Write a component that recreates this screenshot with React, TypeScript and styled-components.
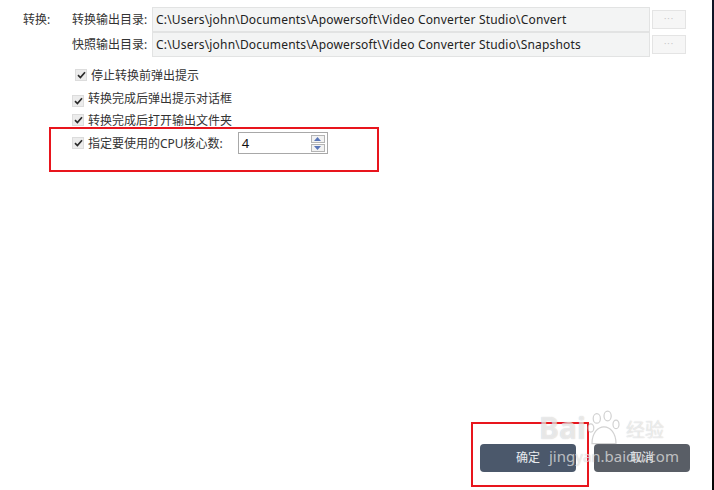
import React from 'react';
import styled, { createGlobalStyle } from 'styled-components';

const GlobalStyle = createGlobalStyle`
  html, body {
    margin: 0;
    padding: 0;
    background: #ffffff;
  }
  body {
    font-family: 'Noto Sans', 'Noto Sans CJK SC', sans-serif;
    font-size: 12px;
    color: #333333;
  }
`;

const Page = styled.div`
  position: relative;
  width: 714px;
  height: 490px;
  display: flex;
  overflow: hidden;
  background: #ffffff;
`;

const Content = styled.div`
  flex: 1;
  display: flex;
  flex-direction: column;
`;

const EdgeStrip = styled.div`
  width: 2px;
  background: linear-gradient(#0f1424 0%, #15243a 40%, #0b0b10 60%, #050505 100%);
`;

const Section = styled.div`
  display: flex;
  padding: 7px 0 0 23px;
`;

const SectionLabel = styled.div`
  width: 49px;
  height: 25px;
  line-height: 25px;
  white-space: nowrap;
`;

const PathGrid = styled.div`
  display: grid;
  grid-template-columns: 80px 498px 36px;
  grid-auto-rows: 25px;
  align-items: center;
`;

const PathLabel = styled.div`
  white-space: nowrap;
  line-height: 25px;
`;

const PathInput = styled.div`
  height: 25px;
  box-sizing: border-box;
  border: 1px solid #e2e3e3;
  background: #f3f4f4;
  padding: 0 3px;
  line-height: 23px;
  color: #222222;
  letter-spacing: 0.18px;
  white-space: nowrap;
  overflow: hidden;
`;

const BrowseButton = styled.div`
  height: 19px;
  margin-left: 2px;
  box-sizing: border-box;
  border: 1px solid #e4e4e4;
  background: #f6f6f6;
  color: #c8c8c8;
  font-size: 9px;
  line-height: 15px;
  text-align: center;
  letter-spacing: 1px;
`;

const Options = styled.div`
  display: flex;
  flex-direction: column;
  padding: 9px 0 0 72px;
`;

const OptionRow = styled.div<{ $indent?: number; $height: number; $bottom?: boolean }>`
  display: flex;
  align-items: ${(p) => (p.$bottom ? 'flex-end' : 'center')};
  box-sizing: border-box;
  height: ${(p) => p.$height}px;
  padding-left: ${(p) => p.$indent ?? 0}px;
  padding-bottom: ${(p) => (p.$bottom ? 2 : 0)}px;
  white-space: nowrap;
`;

const Box = styled.span`
  width: 12px;
  height: 12px;
  box-sizing: border-box;
  border: 1px solid #dcdcdc;
  background: #ececec;
  display: inline-flex;
  align-items: center;
  justify-content: center;
  margin-right: 4px;
`;

const SpinBox = styled.div`
  margin-left: 15px;
  width: 90px;
  height: 22px;
  box-sizing: border-box;
  border: 1px solid #a8a8a8;
  display: flex;
  align-items: center;
  justify-content: space-between;
  padding: 0 2px 0 3px;
  background: #ffffff;
  font-size: 13px;
  color: #111111;
`;

const SpinArrows = styled.div`
  display: flex;
  flex-direction: column;
  gap: 1px;
`;

const SpinArrow = styled.div`
  width: 14px;
  height: 8px;
  box-sizing: border-box;
  border: 1px solid #b4b4b4;
  background: #f2f2f2;
  display: flex;
  align-items: center;
  justify-content: center;
`;

const Spacer = styled.div`
  flex: 1;
`;

const Footer = styled.div`
  display: flex;
  justify-content: flex-end;
  gap: 18px;
  padding: 0 22px 18px 0;
`;

const ActionButton = styled.div<{ $tone: 'primary' | 'secondary' }>`
  width: 96px;
  height: 28px;
  border-radius: 4px;
  background: ${(p) => (p.$tone === 'primary' ? '#4b586b' : '#595e66')};
  color: #e8ebef;
  font-size: 12px;
  line-height: 28px;
  text-align: center;
`;

const Highlight = styled.div<{ $x: number; $y: number; $w: number; $h: number }>`
  position: absolute;
  left: ${(p) => p.$x}px;
  top: ${(p) => p.$y}px;
  width: ${(p) => p.$w}px;
  height: ${(p) => p.$h}px;
  box-sizing: border-box;
  border: 2px solid #e8151d;
  pointer-events: none;
`;

const Watermark = styled.div`
  position: absolute;
  left: 539px;
  top: 406px;
  display: flex;
  flex-direction: column;
  color: rgba(255, 255, 255, 0.6);
  text-shadow: 0 0 1px rgba(110, 110, 110, 0.4);
  pointer-events: none;
`;

const MarkTop = styled.div`
  display: flex;
  align-items: flex-end;
  height: 40px;
`;

const MarkBai = styled.span`
  font-size: 30px;
  font-weight: 700;
  line-height: 36px;
`;

const MarkCn = styled.span`
  font-size: 19px;
  margin-left: 4px;
  line-height: 32px;
`;

const MarkSub = styled.div`
  font-size: 15px;
  line-height: 20px;
  margin-left: 10px;
`;

const Check = () => (
  <Box>
    <svg width="9" height="8" viewBox="0 0 9 8">
      <path d="M1 4.2 L3.4 6.5 L8 1.2" fill="none" stroke="#2b2b2b" strokeWidth="1.7" />
    </svg>
  </Box>
);

const Paw = () => (
  <svg width="36" height="36" viewBox="0 0 30 30" stroke="rgba(140,140,140,0.4)" strokeWidth="1">
    <ellipse cx="9" cy="7" rx="3" ry="4" fill="rgba(255,255,255,0.6)" />
    <ellipse cx="18" cy="5" rx="3" ry="4" fill="rgba(255,255,255,0.6)" />
    <ellipse cx="4" cy="15" rx="2.5" ry="3.5" fill="rgba(255,255,255,0.6)" />
    <ellipse cx="25" cy="12" rx="2.5" ry="3.5" fill="rgba(255,255,255,0.6)" />
    <path d="M5 28 C5 19 10 14 15 14 C20 14 25 19 25 28 Z" fill="rgba(255,255,255,0.6)" />
  </svg>
);

const paths = [
  { label: '转换输出目录:', value: 'C:\\Users\\john\\Documents\\Apowersoft\\Video Converter Studio\\Convert' },
  { label: '快照输出目录:', value: 'C:\\Users\\john\\Documents\\Apowersoft\\Video Converter Studio\\Snapshots' },
];

const App = () => (
  <>
    <GlobalStyle />
    <Page>
      <Content>
        <Section>
          <SectionLabel>转换:</SectionLabel>
          <PathGrid>
            {paths.map((p) => (
              <React.Fragment key={p.label}>
                <PathLabel>{p.label}</PathLabel>
                <PathInput>{p.value}</PathInput>
                <BrowseButton>···</BrowseButton>
              </React.Fragment>
            ))}
          </PathGrid>
        </Section>
        <Options>
          <OptionRow $indent={3} $height={18}>
            <Check />
            停止转换前弹出提示
          </OptionRow>
          <OptionRow $height={25} $bottom>
            <Check />
            转换完成后弹出提示对话框
          </OptionRow>
          <OptionRow $height={22}>
            <Check />
            转换完成后打开输出文件夹
          </OptionRow>
          <OptionRow $height={24}>
            <Check />
            指定要使用的CPU核心数:
            <SpinBox>
              <span>4</span>
              <SpinArrows>
                <SpinArrow>
                  <svg width="7" height="4" viewBox="0 0 7 4">
                    <path d="M0 4 L3.5 0 L7 4 Z" fill="#5a76b8" />
                  </svg>
                </SpinArrow>
                <SpinArrow>
                  <svg width="7" height="4" viewBox="0 0 7 4">
                    <path d="M0 0 L3.5 4 L7 0 Z" fill="#5a76b8" />
                  </svg>
                </SpinArrow>
              </SpinArrows>
            </SpinBox>
          </OptionRow>
        </Options>
        <Spacer />
        <Footer>
          <ActionButton $tone="primary">确定</ActionButton>
          <ActionButton $tone="secondary">取消</ActionButton>
        </Footer>
      </Content>
      <EdgeStrip />
      <Highlight $x={49} $y={127} $w={330} $h={45} />
      <Highlight $x={471} $y={422} $w={118} $h={65} />
      <Watermark>
        <MarkTop>
          <MarkBai>Bai</MarkBai>
          <Paw />
          <MarkCn>经验</MarkCn>
        </MarkTop>
        <MarkSub>jingyan.baidu.com</MarkSub>
      </Watermark>
    </Page>
  </>
);

export default App;
